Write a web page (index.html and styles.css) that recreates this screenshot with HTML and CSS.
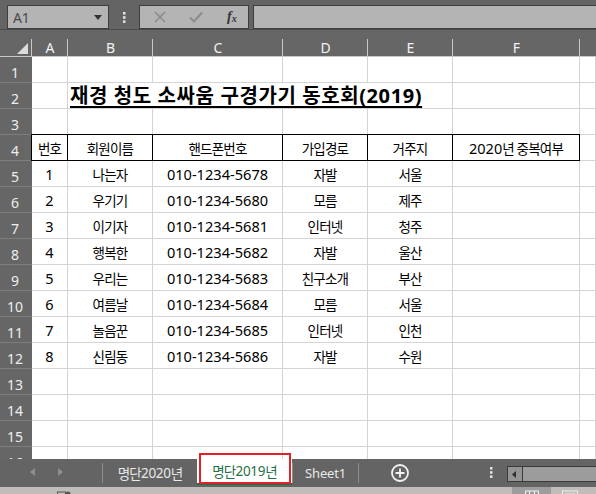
FILE: index.html
```html
<!DOCTYPE html>
<html lang="ko">
<head>
<meta charset="utf-8">
<link rel="stylesheet" href="styles.css">
</head>
<body>
<div class="app">
  <div class="fbar">
    <div class="namebox">
      <span class="nb-text">A1</span>
      <svg class="caret" width="8" height="5" viewBox="0 0 8 5"><path d="M0 0H8L4 5Z" fill="#333"/></svg>
    </div>
    <div class="vdots"><svg width="3" height="11" viewBox="0 0 3 11"><rect x="0" y="0" width="2.5" height="2.5" fill="#e6e6e6"/><rect x="0" y="4.2" width="2.5" height="2.5" fill="#e6e6e6"/><rect x="0" y="8.4" width="2.5" height="2.5" fill="#e6e6e6"/></svg></div>
    <div class="fbtns">
      <svg class="fb-x" width="12" height="12" viewBox="0 0 12 12"><path d="M1 1L11 11M11 1L1 11" stroke="#8c8c8c" stroke-width="1.6"/></svg>
      <svg class="fb-ok" width="14" height="12" viewBox="0 0 14 12"><path d="M1 6.5L5 10.5L13 1.5" stroke="#8c8c8c" stroke-width="2" fill="none"/></svg>
      <span class="fx">f<sub>x</sub></span>
    </div>
    <div class="finput"></div>
  </div>

  <div class="sheet">
    <div class="ch corner"><svg width="11" height="11" viewBox="0 0 11 11"><path d="M11 0V11H0Z" fill="#dcdcdc"/></svg></div>
    <div class="ch">A</div><div class="ch">B</div><div class="ch">C</div><div class="ch">D</div><div class="ch">E</div><div class="ch">F</div><div class="ch last"></div>

    <div class="rh">1</div><div class="c"></div><div class="c"></div><div class="c"></div><div class="c"></div><div class="c"></div><div class="c"></div><div class="c"></div>

    <div class="rh">2</div><div class="c"></div><div class="c title"><span>재경 청도 소싸움 구경가기 동호회(2019)</span></div><div class="c"></div><div class="c"></div>

    <div class="rh">3</div><div class="c"></div><div class="c"></div><div class="c"></div><div class="c"></div><div class="c"></div><div class="c"></div><div class="c"></div>

    <div class="rh">4</div><div class="c hd first">번호</div><div class="c hd">회원이름</div><div class="c hd">핸드폰번호</div><div class="c hd">가입경로</div><div class="c hd">거주지</div><div class="c hd"><span class="num">2020</span>년 중복여부</div><div class="c"></div>

    <div class="rh">5</div><div class="c num">1</div><div class="c">나는자</div><div class="c ph">010-1234-5678</div><div class="c">자발</div><div class="c">서울</div><div class="c"></div><div class="c"></div>
    <div class="rh">6</div><div class="c num">2</div><div class="c">우기기</div><div class="c ph">010-1234-5680</div><div class="c">모름</div><div class="c">제주</div><div class="c"></div><div class="c"></div>
    <div class="rh">7</div><div class="c num">3</div><div class="c">이기자</div><div class="c ph">010-1234-5681</div><div class="c">인터넷</div><div class="c">청주</div><div class="c"></div><div class="c"></div>
    <div class="rh">8</div><div class="c num">4</div><div class="c">행복한</div><div class="c ph">010-1234-5682</div><div class="c">자발</div><div class="c">울산</div><div class="c"></div><div class="c"></div>
    <div class="rh">9</div><div class="c num">5</div><div class="c">우리는</div><div class="c ph">010-1234-5683</div><div class="c">친구소개</div><div class="c">부산</div><div class="c"></div><div class="c"></div>
    <div class="rh">10</div><div class="c num">6</div><div class="c">여름날</div><div class="c ph">010-1234-5684</div><div class="c">모름</div><div class="c">서울</div><div class="c"></div><div class="c"></div>
    <div class="rh">11</div><div class="c num">7</div><div class="c">놀음꾼</div><div class="c ph">010-1234-5685</div><div class="c">인터넷</div><div class="c">인천</div><div class="c"></div><div class="c"></div>
    <div class="rh">12</div><div class="c num">8</div><div class="c">신림동</div><div class="c ph">010-1234-5686</div><div class="c">자발</div><div class="c">수원</div><div class="c"></div><div class="c"></div>

    <div class="rh">13</div><div class="c"></div><div class="c"></div><div class="c"></div><div class="c"></div><div class="c"></div><div class="c"></div><div class="c"></div>
    <div class="rh">14</div><div class="c"></div><div class="c"></div><div class="c"></div><div class="c"></div><div class="c"></div><div class="c"></div><div class="c"></div>
    <div class="rh">15</div><div class="c"></div><div class="c"></div><div class="c"></div><div class="c"></div><div class="c"></div><div class="c"></div><div class="c"></div>
    <div class="rh">16</div><div class="c"></div><div class="c"></div><div class="c"></div><div class="c"></div><div class="c"></div><div class="c"></div><div class="c"></div>
  </div>

  <div class="tabs">
    <div class="nav">
      <svg width="5" height="8" viewBox="0 0 5 8"><path d="M5 0V8L0 4Z" fill="#8e8e8e"/></svg>
      <svg width="5" height="8" viewBox="0 0 5 8"><path d="M0 0V8L5 4Z" fill="#8e8e8e"/></svg>
    </div>
    <div class="sep"></div>
    <div class="tab">명단<span class="num">2020</span>년</div>
    <div class="tab active">명단<span class="num">2019</span>년</div>
    <div class="sep"></div>
    <div class="tab sheet1">Sheet1</div>
    <div class="sep"></div>
    <div class="add"><svg width="20" height="20" viewBox="0 0 20 20"><circle cx="10" cy="10" r="8" fill="none" stroke="#f2f2f2" stroke-width="1.8"/><path d="M10 5.5V14.5M5.5 10H14.5" stroke="#f2f2f2" stroke-width="1.8"/></svg></div>
    <div class="spacer"></div>
    <div class="tdots"><svg width="3" height="11" viewBox="0 0 3 11"><rect x="0" y="0" width="2.5" height="2.5" fill="#e6e6e6"/><rect x="0" y="4.2" width="2.5" height="2.5" fill="#e6e6e6"/><rect x="0" y="8.4" width="2.5" height="2.5" fill="#e6e6e6"/></svg></div>
    <div class="hscroll">
      <div class="sb-btn"><svg width="4" height="7" viewBox="0 0 4 7"><path d="M4 0V7L0 3.5Z" fill="#2e2e2e"/></svg></div>
      <div class="sb-track"></div>
    </div>
    <div class="mark"></div>
  </div>

  <div class="status">
    <span class="ready">준비</span>
    <svg class="macro" width="14" height="10" viewBox="0 0 14 10"><rect x="0.5" y="2" width="8" height="7" fill="none" stroke="#555"/><circle cx="11" cy="4" r="2.5" fill="#555"/></svg>
    <div class="status-spacer"></div>
    <div class="view on"><svg width="14" height="10" viewBox="0 0 14 10"><path d="M0.5 1H13.5M0.5 5H13.5M4.5 1V10M9.5 1V10M0.5 1V10M13.5 1V10" stroke="#f4f4f4" fill="none"/></svg></div>
    <div class="view"><svg width="16" height="10" viewBox="0 0 16 10"><rect x="0.5" y="1" width="15" height="9" fill="none" stroke="#f0f0f0"/><path d="M3 4H13" stroke="#f0f0f0"/></svg></div>
  </div>
</div>
</body>
</html>
```

FILE: styles.css
```css
* { box-sizing: border-box; }

html, body {
  margin: 0;
  padding: 0;
}

body {
  width: 596px;
  height: 494px;
  overflow: hidden;
  background: #666666;
  font-family: "Noto Sans", "Noto Sans CJK KR", sans-serif;
}

.app {
  width: 596px;
  height: 494px;
  display: flex;
  flex-direction: column;
  overflow: hidden;
}

/* formula bar */
.fbar {
  height: 30px;
  flex: none;
  display: flex;
  align-items: flex-start;
  padding-top: 5px;
  border-bottom: 1px solid #4a4a4a;
  background: #646464;
}

.namebox {
  margin-left: 7px;
  width: 102px;
  height: 24px;
  background: #b4b4b4;
  border: 1px solid #3e3e3e;
  display: flex;
  align-items: center;
  padding-left: 5px;
  padding-right: 6px;
}

.nb-text {
  font-size: 14px;
  color: #4a4a4a;
  flex: 1;
  letter-spacing: -0.2px;
}

.caret { display: block; }

.vdots {
  width: 30px;
  height: 24px;
  display: flex;
  align-items: center;
  justify-content: center;
  padding-left: 1px;
}

.vdots svg, .tdots svg { display: block; }

.fbtns {
  width: 110px;
  height: 24px;
  background: #b4b4b4;
  border: 1px solid #3e3e3e;
  display: flex;
  align-items: center;
  padding-left: 14px;
}

.fb-x { margin-right: 23px; }
.fb-ok { margin-right: 24px; }

.fx {
  font-family: "Liberation Serif", "DejaVu Serif", serif;
  font-style: italic;
  font-weight: bold;
  font-size: 14px;
  color: #333;
  line-height: 1;
}

.fx sub {
  font-size: 10px;
  vertical-align: -1px;
}

.finput {
  flex: 1;
  margin-left: 4px;
  height: 24px;
  background: #b4b4b4;
  border: 1px solid #3e3e3e;
  border-right: none;
}

/* sheet grid */
.sheet {
  flex: none;
  height: 429px;
  overflow: hidden;
  display: grid;
  grid-template-columns: 32px 36px 85px 130px 85px 85px 127px 1fr;
  grid-template-rows: 27px;
  grid-auto-rows: 26px;
  background: #ffffff;
}

.ch {
  background: #666666 linear-gradient(#c8c8c8, #c8c8c8) right bottom / 1px 17px no-repeat;
  border-bottom: 1px solid #c8c8c8;
  color: #f2f2f2;
  font-size: 14px;
  display: flex;
  align-items: center;
  justify-content: center;
  padding-top: 8px;
}

.ch.last { background: #666666; }

.corner {
  justify-content: flex-end;
  align-items: flex-end;
  padding: 0 4px 2px 0;
}

.corner svg { display: block; }

.rh {
  background: #666666;
  color: #eeeeee;
  font-size: 14px;
  border-bottom: 1px solid #7e7e7e;
  display: flex;
  align-items: center;
  justify-content: center;
  padding-top: 5px;
  padding-right: 2px;
}

.c {
  background: #ffffff;
  border-right: 1px solid #d4d4d4;
  border-bottom: 1px solid #d4d4d4;
  display: flex;
  align-items: center;
  justify-content: center;
  font-size: 13.5px;
  letter-spacing: -0.8px;
  color: #000;
  white-space: nowrap;
  padding-top: 1px;
}

.num {
  font-size: 14.5px;
  letter-spacing: 0;
}

.ph {
  font-size: 14.6px;
  letter-spacing: 0;
}

.title {
  grid-column: span 4;
  justify-content: flex-start;
  align-items: flex-end;
  padding-left: 2px;
  padding-bottom: 1px;
  font-size: 20px;
  font-weight: bold;
  letter-spacing: 0.6px;
  overflow: visible;
}

.title span {
  text-decoration: underline;
  text-decoration-thickness: 2px;
  text-underline-offset: 3px;
  line-height: 1.1;
}

.hd {
  border-right-color: #000;
  border-bottom-color: #000;
  box-shadow: 0 -1px 0 #000;
}

.hd.first {
  box-shadow: 0 -1px 0 #000, -1px 0 0 #000, -1px -1px 0 #000;
}

/* sheet tabs */
.tabs {
  flex: none;
  height: 28px;
  display: flex;
  align-items: stretch;
  background: #646464;
  position: relative;
}

.nav {
  width: 102px;
  display: flex;
  align-items: center;
  padding-left: 30px;
  gap: 23px;
  padding-bottom: 2px;
}

.nav svg { display: block; }

.sep {
  width: 1px;
  background: #8c8c8c;
  margin: 4px 0;
}

.tab {
  width: 94px;
  display: flex;
  align-items: center;
  justify-content: center;
  color: #e8e8e8;
  font-size: 13.5px;
  letter-spacing: -0.8px;
  padding-bottom: 1px;
}

.tab .num { font-size: 13.5px; letter-spacing: -0.3px; }

.tab.active {
  width: 95px;
  background: #ffffff;
  color: #1f7044;
  border-bottom: 2px solid #217346;
  margin-bottom: 2px;
  padding-bottom: 0;
}

.tab.sheet1 {
  width: 65px;
  font-family: "Noto Sans", sans-serif;
  font-size: 13px;
  letter-spacing: -0.2px;
}

.add {
  width: 82px;
  display: flex;
  align-items: center;
  justify-content: center;
  padding-bottom: 1px;
}

.add svg { display: block; }

.spacer { flex: 1; }

.tdots {
  width: 16px;
  display: flex;
  align-items: center;
  justify-content: center;
  margin-right: 8px;
  padding-bottom: 1px;
}

.hscroll {
  width: 89px;
  height: 16px;
  margin-top: 7px;
  display: flex;
  border: 1px solid #3a3a3a;
  border-right: none;
  background: #9c9c9c;
}

.sb-btn {
  width: 15px;
  border-right: 1px solid #3a3a3a;
  display: flex;
  align-items: center;
  justify-content: center;
  padding-right: 3px;
  background: #949494;
}

.sb-btn svg { display: block; }

.sb-track { flex: 1; }

.mark {
  position: absolute;
  left: 199px;
  top: -6px;
  width: 92px;
  height: 31px;
  border: 2px solid #e5202a;
  pointer-events: none;
}

/* status bar */
.status {
  flex: none;
  height: 22px;
  background: #c0bdb9;
  display: flex;
  align-items: flex-start;
  padding-left: 12px;
}

.ready {
  font-size: 13px;
  color: #333;
  letter-spacing: -0.5px;
  margin-top: 3px;
}

.macro {
  display: block;
  margin-left: 22px;
  margin-top: 3px;
}

.status-spacer { flex: 1; }

.view {
  height: 22px;
  display: flex;
  align-items: flex-start;
  justify-content: center;
  padding-top: 3px;
}

.view.on {
  width: 39px;
  background: #9d9d9d;
  margin-right: 11px;
}

.view:last-child {
  width: 16px;
  margin-right: 18px;
}

.view svg { display: block; }
```
